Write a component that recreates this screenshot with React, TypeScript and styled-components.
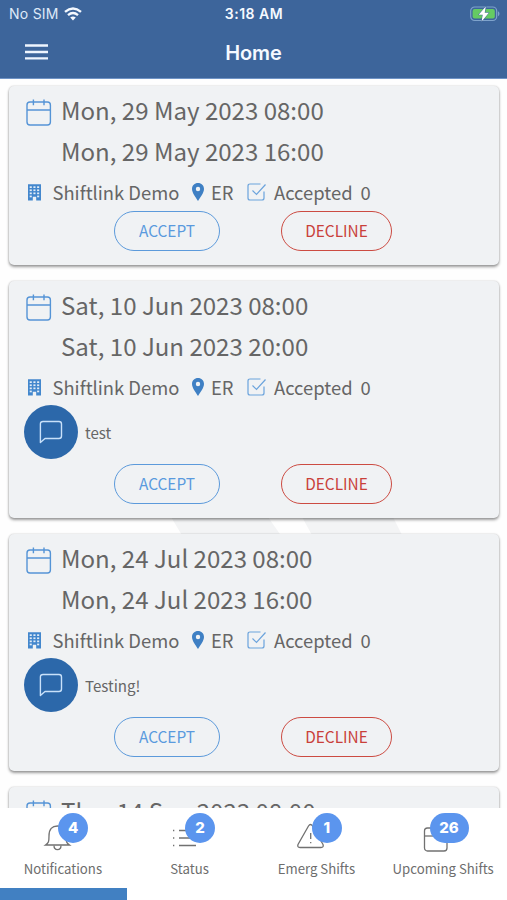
import React from "react";
import styled, { createGlobalStyle } from "styled-components";

const Global = createGlobalStyle`
  * { box-sizing: border-box; }
  body { margin: 0; background: #fff; }
  svg { display: block; flex: none; }
`;

const sans = `"Noto Sans CJK SC", "Noto Sans", sans-serif`;
const system = `Inter, "Liberation Sans", sans-serif`;

const Screen = styled.div`
  width: 507px;
  height: 900px;
  display: flex;
  flex-direction: column;
  overflow: hidden;
  background: #fefefe;
  font-family: ${sans};
  color: #666;
`;

const Header = styled.header`
  flex: none;
  height: 79px;
  background: #3d659b;
  border-bottom: 1px solid #6f93c6;
  color: #f5f9ff;
  font-family: ${system};
`;

const HeaderRow = styled.div<{ $height: number; $inset: number }>`
  height: ${(p) => p.$height}px;
  display: grid;
  grid-template-columns: 1fr auto 1fr;
  align-items: center;
  padding: 0 ${(p) => p.$inset}px;
`;

const Carrier = styled.div`
  display: flex;
  align-items: center;
  gap: 5.5px;
  font-size: 14px;
  letter-spacing: 0.25px;
  color: #dfe9f8;
`;

const Clock = styled.div`
  font-size: 14px;
  font-weight: 600;
  letter-spacing: 0.5px;
  padding-left: 1px;
`;

const Battery = styled.div`
  justify-self: end;
  margin-right: -2px;
`;

const Title = styled.h1`
  margin: 0;
  font-size: 20px;
  font-weight: 600;
  letter-spacing: -0.1px;
  padding-top: 1px;
`;

const MenuButton = styled.button`
  justify-self: start;
  border: 0;
  padding: 0;
  background: none;
`;

const Feed = styled.main`
  flex: 1;
  min-height: 0;
  overflow: hidden;
  display: grid;
  background: #fefefe;
`;

const Watermark = styled.div`
  grid-area: 1 / 1;
  padding: 438px 0 0 170px;
`;

const List = styled.div`
  grid-area: 1 / 1;
  height: 729px;
  display: flex;
  flex-direction: column;
  gap: 16px;
  padding: 7px 8px 0 9px;
`;

const Card = styled.article<{ $tall: boolean }>`
  flex: none;
  height: ${(p) => (p.$tall ? 237 : 179)}px;
  padding: 5px 15px 0;
  border-radius: 5px;
  background: #f0f2f4;
  box-shadow: 0 2px 3px rgba(0, 0, 0, 0.38), 0 0 2px rgba(0, 0, 0, 0.2);
`;

const DateGrid = styled.div`
  display: grid;
  grid-template-columns: 37px 1fr;
  grid-auto-rows: 41px;
`;

const CalendarCell = styled.div`
  grid-row: span 2;
  padding: 7.5px 0 0 2px;
`;

const DateText = styled.div`
  height: 41px;
  line-height: 37px;
  font-size: 24.05px;
  white-space: nowrap;
`;

const Meta = styled.div`
  height: 38px;
  display: flex;
  align-items: center;
  font-size: 18.4px;
  line-height: 38px;
  padding-left: 4px;
  white-space: nowrap;
`;

const MetaText = styled.span<{ $left: number; $width: number }>`
  margin-left: ${(p) => p.$left}px;
  width: ${(p) => p.$width}px;
`;

const Message = styled.div`
  height: 58px;
  margin-top: -1px;
  margin-bottom: 1px;
  display: flex;
  align-items: flex-start;
  gap: 7px;
  font-size: 15.1px;
  line-height: 55px;
`;

const Bubble = styled.div`
  width: 54px;
  height: 54px;
  border-radius: 50%;
  display: grid;
  place-items: center;
  background: #2c68aa;
`;

const Actions = styled.div`
  display: flex;
  gap: 61px;
  padding-left: 90px;
`;

const Action = styled.button<{ $danger?: boolean }>`
  width: ${(p) => (p.$danger ? 111 : 106)}px;
  height: 40px;
  padding: 0 0 2px;
  border: 1.4px solid ${(p) => (p.$danger ? "#cc4b42" : "#5c9adb")};
  border-radius: 20px;
  background: transparent;
  color: ${(p) => (p.$danger ? "#c9403a" : "#5a9ade")};
  font: 400 15.4px/36px ${sans};
`;

const TabBar = styled.nav`
  flex: none;
  height: 92px;
  display: grid;
  grid-template-columns: repeat(4, 1fr);
  background: #fff;
`;

const Tab = styled.div<{ $active?: boolean }>`
  position: relative;
  display: flex;
  flex-direction: column;
  align-items: center;
  padding-top: 13px;
  border-bottom: 12px solid ${(p) => (p.$active ? "#4180c2" : "#fff")};
`;

const TabIcon = styled.div`
  width: 32px;
  height: 32px;
  margin-right: 11px;
`;

const TabLabel = styled.span`
  margin: 5px 1px 0 0;
  font-size: 13.2px;
  line-height: 22px;
  color: #6d6d6d;
  white-space: nowrap;
`;

const Badge = styled.span<{ $wide: boolean }>`
  position: absolute;
  top: 5px;
  right: 38.5px;
  width: ${(p) => (p.$wide ? 39 : 30)}px;
  height: 30px;
  border-radius: 15px;
  background: #5b95ee;
  color: #fff;
  font: 800 15px/30px ${system};
  text-align: center;
`;

const WifiIcon = () => (
  <svg width="18" height="14" viewBox="0 0 18 14" fill="none" stroke="#f5f9ff" strokeWidth="2.4">
    <path d="M1 4.8Q9-2 17 4.8M4 8.2q5-4.2 10 0" />
    <path d="M9 13.5 6.2 10.6q2.8-2.2 5.6 0z" fill="#f5f9ff" stroke="none" />
  </svg>
);

const BatteryIcon = () => (
  <svg width="30" height="16" viewBox="0 0 30 16">
    <rect x=".7" y="1" width="26" height="13.5" rx="4" fill="none" stroke="#7fa3cc" strokeWidth="1.2" />
    <path d="M28 5.3c2 1 2 4 0 5z" fill="#7fa3cc" />
    <rect x="2.6" y="3" width="22.2" height="9.6" rx="2" fill="#65cb63" />
    <path d="M15.8.5 8.6 8.7h4.1l-1.1 6.8 7.3-8.7h-4.2z" fill="#fff" stroke="#3d659b" strokeWidth="1" paintOrder="stroke" />
  </svg>
);

const MenuIcon = () => (
  <svg width="23" height="16" viewBox="0 0 23 16" fill="none" stroke="#eef5ff" strokeWidth="2.3">
    <path d="M0 1.5h23M0 8h23M0 14.3h23" />
  </svg>
);

const CalendarIcon = () => (
  <svg width="26" height="28" viewBox="0 0 26 28" fill="none" stroke="#5594d6" strokeWidth="1.4">
    <rect x="1" y="3" width="23.4" height="23" rx="3" />
    <path d="M1 11h23.4M7.4.5v5.8M18 .5v5.8" />
  </svg>
);

const BuildingIcon = () => (
  <svg width="13" height="17" viewBox="0 0 13 17">
    <path d="M0 .3h13v16.2H8.2v-3.7H4.8v3.7H0z" fill="#4387cd" />
    <g fill="#e3edf7">
      {[2.3, 5.4, 8.5, 11.6].map((y) =>
        [1.7, 5.4, 9.1].map((x) => (
          <rect key={`${x}-${y}`} x={x} y={y} width="2.1" height="1.7" opacity={y > 11 && x === 5.4 ? 0 : 1} />
        ))
      )}
    </g>
  </svg>
);

const PinIcon = () => (
  <svg width="12" height="18" viewBox="0 0 12 18">
    <path fillRule="evenodd" fill="#3f80c4" d="M6 0c3.4 0 6 2.6 6 5.9C12 10 8 14.3 6 18 4 14.3 0 10 0 5.9 0 2.6 2.6 0 6 0m0 3.8a2.2 2.2 0 1 0 0 4.4 2.2 2.2 0 0 0 0-4.4" />
  </svg>
);

const CheckIcon = () => (
  <svg width="20" height="18" viewBox="0 0 20 18" fill="none" stroke="#6ba3dc" strokeWidth="1.2">
    <path d="M13.5 1H3Q1 1 1 3v12q0 2 2 2h12q2 0 2-2V8.5" />
    <path d="m5.5 7.5 4 4 9-10" />
  </svg>
);

const ChatIcon = () => (
  <svg width="24" height="24" viewBox="0 0 24 24" fill="none" stroke="#c9e1fa" strokeWidth="1.4" strokeLinejoin="round">
    <path d="M4 1.5h16q2.5 0 2.5 2.5v12q0 2.5-2.5 2.5H6L1.4 22.500V4Q1.400 1.500 4 1.500z" />
  </svg>
);

const tabPaths = {
  bell: (
    <>
      <path d="M3.5 24c3-2 3.500-3 3.500-9 0-7 3-10 8.500-10S24 8 24 15c0 6 .5 7 3.500 9z" />
      <path d="M12 24.500c0 5.500 7 5.500 7 0" />
    </>
  ),
  list: (
    <>
      <path d="M10 9.500h17M10 17h17M10 24.500h17" />
      <path d="M4 9.500h1.300M4 17h1.300M4 24.500h1.300" />
    </>
  ),
  alert: (
    <>
      <path d="M13.500 5 3 23.500Q2 26.500 5 26.500h21q3 0 2-3L17.500 5q-2-3-4 0z" />
      <path d="M15.700 12v6M15.700 21v1.300" />
    </>
  ),
  calendar: (
    <>
      <rect x="2.500" y="7" width="22.500" height="23" rx="3" />
      <path d="M2.500 15h22.500" />
    </>
  ),
};

const TabGlyph = ({ name }: { name: keyof typeof tabPaths }) => (
  <svg width="32" height="32" viewBox="0 0 32 32" fill="none" stroke="#717171" strokeWidth="1.3">
    {tabPaths[name]}
  </svg>
);

type Shift = { start: string; end: string; note?: string };

const shifts: Shift[] = [
  { start: "Mon, 29 May 2023 08:00", end: "Mon, 29 May 2023 16:00" },
  { start: "Sat, 10 Jun 2023 08:00", end: "Sat, 10 Jun 2023 20:00", note: "test" },
  { start: "Mon, 24 Jul 2023 08:00", end: "Mon, 24 Jul 2023 16:00", note: "Testing!" },
  { start: "Thu, 14 Sep 2023 08:00", end: "" },
];

const tabs: { icon: keyof typeof tabPaths; label: string; count: number }[] = [
  { icon: "bell", label: "Notifications", count: 4 },
  { icon: "list", label: "Status", count: 2 },
  { icon: "alert", label: "Emerg Shifts", count: 1 },
  { icon: "calendar", label: "Upcoming Shifts", count: 26 },
];

const ShiftCard = ({ start, end, note }: Shift) => (
  <Card $tall={!!note}>
    <DateGrid>
      <CalendarCell>
        <CalendarIcon />
      </CalendarCell>
      <DateText>{start}</DateText>
      <DateText>{end}</DateText>
    </DateGrid>
    {end && (
      <>
        <Meta>
          <BuildingIcon />
          <MetaText $left={11.5} $width={139.5}>Shiftlink Demo</MetaText>
          <PinIcon />
          <MetaText $left={7} $width={36}>ER</MetaText>
          <CheckIcon />
          <MetaText $left={7} $width={86.5}>Accepted</MetaText>
          <span>0</span>
        </Meta>
        {note && (
          <Message>
            <Bubble>
              <ChatIcon />
            </Bubble>
            {note}
          </Message>
        )}
        <Actions>
          <Action>ACCEPT</Action>
          <Action $danger>DECLINE</Action>
        </Actions>
      </>
    )}
  </Card>
);

export default function App() {
  return (
    <>
      <Global />
      <Screen>
        <Header>
          <HeaderRow $height={27} $inset={9}>
            <Carrier>
              No SIM <WifiIcon />
            </Carrier>
            <Clock>3:18 AM</Clock>
            <Battery>
              <BatteryIcon />
            </Battery>
          </HeaderRow>
          <HeaderRow $height={50} $inset={25}>
            <MenuButton aria-label="Menu">
              <MenuIcon />
            </MenuButton>
            <Title>Home</Title>
          </HeaderRow>
        </Header>
        <Feed>
          <Watermark>
            <svg width="236" height="20" viewBox="0 0 236 20" fill="#f3f4f5">
              <path d="M1 0h97l14 20H13zM132 0h91l10 20h-90z" />
            </svg>
          </Watermark>
          <List>
            {shifts.map((s) => (
              <ShiftCard key={s.start} {...s} />
            ))}
          </List>
        </Feed>
        <TabBar>
          {tabs.map((t, i) => (
            <Tab key={t.label} $active={i === 0}>
              <TabIcon>
                <TabGlyph name={t.icon} />
              </TabIcon>
              <TabLabel>{t.label}</TabLabel>
              <Badge $wide={t.count > 9}>{t.count}</Badge>
            </Tab>
          ))}
        </TabBar>
      </Screen>
    </>
  );
}
